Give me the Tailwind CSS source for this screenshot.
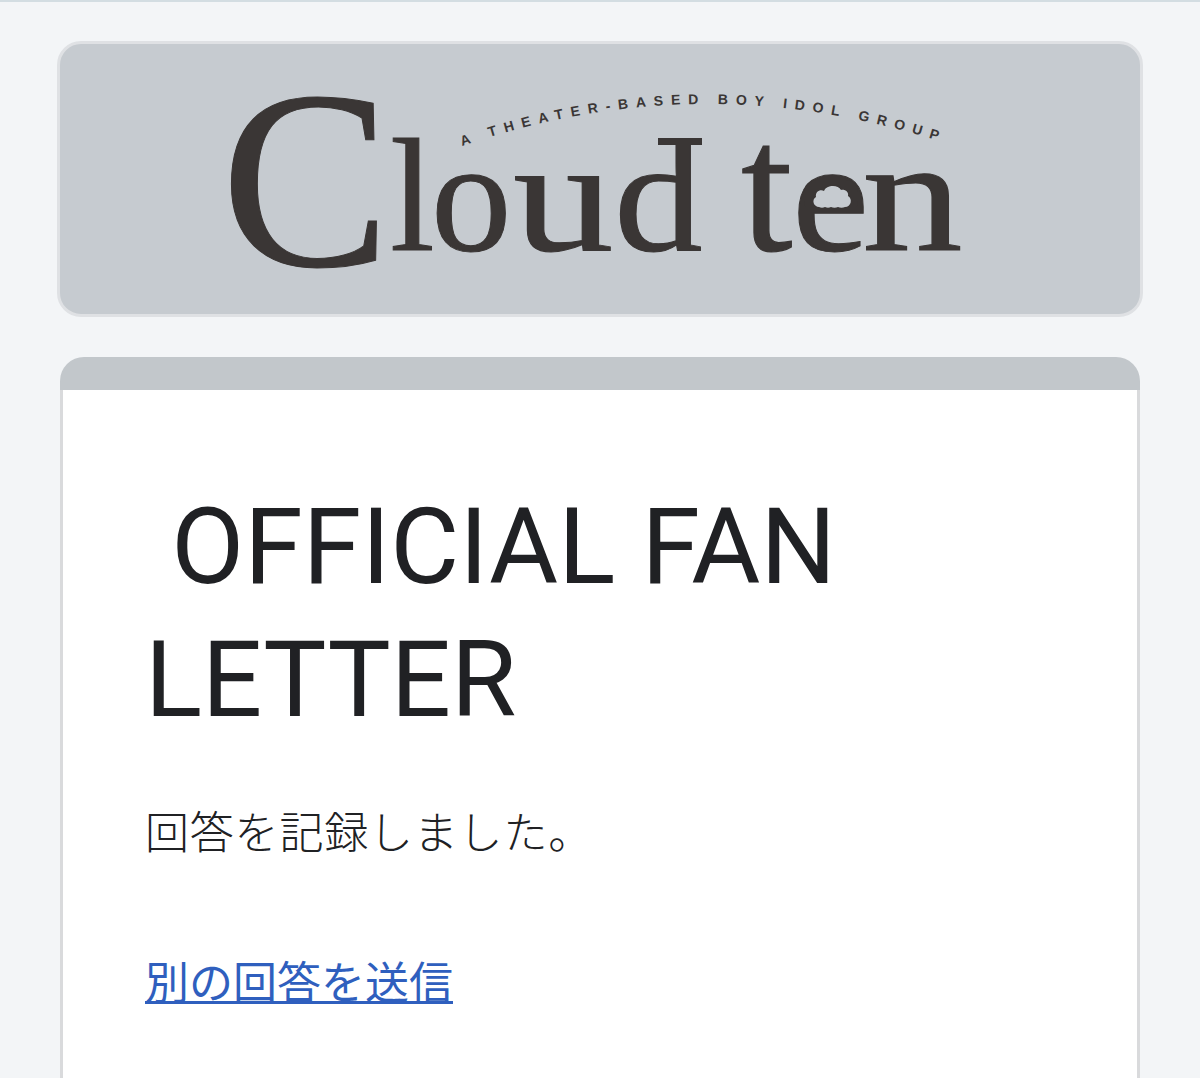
<!DOCTYPE html>
<html lang="ja">
<head>
    <meta charset="UTF-8">
    <meta name="viewport" content="width=device-width, initial-scale=1.0">
    <title>OFFICIAL FAN LETTER</title>
    <script src="https://cdn.jsdelivr.net/npm/@tailwindcss/browser@4"></script>
</head>
<body class="bg-[#f3f5f7] h-[1078px] overflow-hidden font-['Roboto','Noto_Sans_CJK_JP',sans-serif]">
    <div class="h-[2px] bg-[#d3dde2]"></div>

    <div class="px-[57px] pt-[39px]">
        <!-- ロゴ -->
        <div class="h-[276px] rounded-[24px] border-[3px] border-[#dfe1e4] bg-[#c6cbd0]">
            <svg width="1080" height="270" viewBox="60 44 1080 270" class="block overflow-visible">
                <defs>
                    <path id="arc" d="M462 146 Q700 64 942 142"></path>
                </defs>
                <g fill="#3a3635" stroke="#3a3635" stroke-width="1" class="font-['Liberation_Serif',serif]">
                    <text x="221" y="266" class="text-[254px]">C</text>
                    <text transform="translate(390 250)" class="text-[161px]">l</text>
                    <text transform="translate(431 250)" class="text-[161px]">o</text>
                    <text transform="translate(513 250) scale(1.25 1)" class="text-[161px]">u</text>
                    <text transform="translate(614 250) scale(1.1 1)" class="text-[161px]">d</text>
                    <text transform="translate(741 250) scale(1.15 1.15)" class="text-[161px]">t</text>
                    <text transform="translate(792 250) scale(1.08 1)" class="text-[161px]">e</text>
                    <text transform="translate(862 250) scale(1.25 1)" class="text-[161px]">n</text>
                </g>
                <!-- d の上のセリフ -->
                <rect x="658" y="138" width="44" height="7" fill="#3a3635"></rect>
                <!-- e の中の雲 -->
                <rect x="804" y="180" width="54" height="33" rx="12" fill="#3a3635"></rect>
                <path fill="#c6cbd0" d="M819 207c-5 0-8-7-3-10-1-5 4-8 8-6 2-6 14-7 17-1 4-1 8 2 7 6 5 3 3 11-3 11-2 1-5 1-7 0-2 1-5 1-7 0-2 1-4 1-6 0-2 1-4 1-6 0z"></path>
                <text fill="#3a3635" class="font-['Liberation_Sans',sans-serif] text-[14px] font-bold">
                    <textPath href="#arc" textLength="484">A THEATER-BASED BOY IDOL GROUP</textPath>
                </text>
            </svg>
        </div>
    </div>

    <div class="mx-[60px] mt-[40px] rounded-t-[24px] overflow-hidden">
        <div class="h-[33px] bg-[#c2c7cb]"></div>
        <div class="h-[700px] bg-white border-x-[3px] border-[#d9dadc] pl-[82px] pr-[80px] pt-[91px] text-[#202124]">
            <h1 class="text-[106px] leading-[133px] whitespace-pre-wrap"> OFFICIAL FAN LETTER</h1>
            <p class="mt-[57px] text-[44px] leading-[60px] font-light tracking-[0.8px]">回答を記録しました。</p>
            <a href="#" class="block mt-[90px] text-[44px] leading-[60px] text-[#2f5fbe] underline decoration-[3px]">別の回答を送信</a>
        </div>
    </div>
</body>
</html>
